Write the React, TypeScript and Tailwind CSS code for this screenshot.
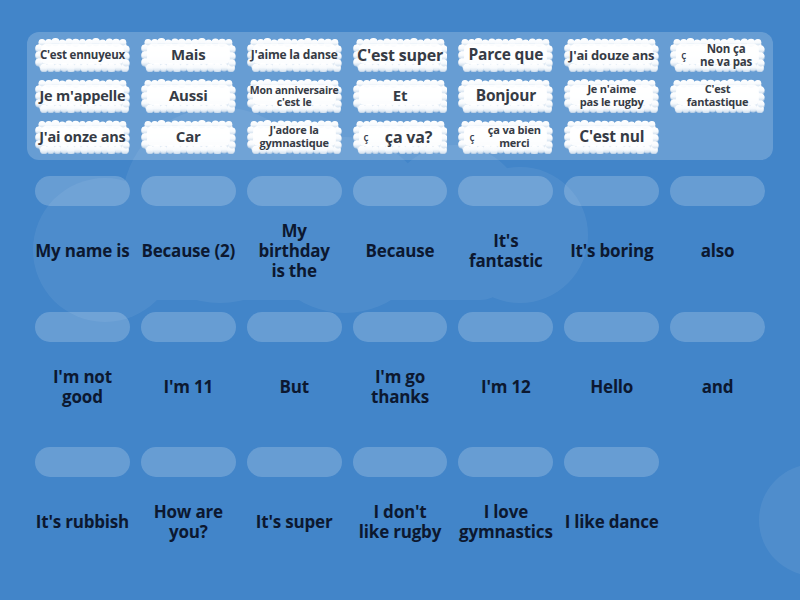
import React from "react";

type Tile = {
  text: string;
  size: number;
  cedilla?: boolean;
};

const tiles: Tile[] = [
  { text: "C'est ennuyeux", size: 11.5 },
  { text: "Mais", size: 15 },
  { text: "J'aime la danse", size: 12 },
  { text: "C'est super", size: 16 },
  { text: "Parce que", size: 15.5 },
  { text: "J'ai douze ans", size: 13 },
  { text: "Non ça\nne va pas", size: 11.5, cedilla: true },
  { text: "Je m'appelle", size: 14.5 },
  { text: "Aussi", size: 15 },
  { text: "Mon anniversaire\nc'est le", size: 10.5 },
  { text: "Et", size: 15 },
  { text: "Bonjour", size: 15.5 },
  { text: "Je n'aime\npas le rugby", size: 11 },
  { text: "C'est\nfantastique", size: 11 },
  { text: "J'ai onze ans", size: 14.5 },
  { text: "Car", size: 15 },
  { text: "J'adore la\ngymnastique", size: 11 },
  { text: "ça va?", size: 16, cedilla: true },
  { text: "ça va bien\nmerci", size: 11, cedilla: true },
  { text: "C'est nul", size: 15.5 },
];

const targets: string[][] = [
  [
    "My name is",
    "Because (2)",
    "My\nbirthday\nis the",
    "Because",
    "It's\nfantastic",
    "It's boring",
    "also",
  ],
  ["I'm not\ngood", "I'm 11", "But", "I'm go\nthanks", "I'm 12", "Hello", "and"],
  [
    "It's rubbish",
    "How are\nyou?",
    "It's super",
    "I don't\nlike rugby",
    "I love\ngymnastics",
    "I like dance",
  ],
];

// puffy outline: circles strung along a rounded rect
function CloudShape() {
  const puffs: { x: number; y: number; r: number }[] = [];
  for (let i = 0; i < 13; i++) {
    const x = 7 + i * 6.75;
    puffs.push({ x, y: 4.2 + (i % 2) * 0.6, r: 3.6 + (i % 3) * 0.4 });
    puffs.push({ x: x + 2, y: 29.6 - (i % 2) * 0.6, r: 3.8 + ((i + 1) % 3) * 0.4 });
  }
  for (let j = 0; j < 3; j++) {
    const y = 10 + j * 7;
    puffs.push({ x: 3.8, y, r: 3.7 });
    puffs.push({ x: 91.2, y: y + 1, r: 3.7 });
  }
  return (
    <svg
      viewBox="0 0 95 34"
      preserveAspectRatio="none"
      className="absolute inset-0 h-full w-full"
    >
      <defs>
        <linearGradient id="puff" x1="0" y1="0" x2="0" y2="1">
          <stop offset="0" stopColor="#ffffff" />
          <stop offset="0.55" stopColor="#f7fafd" />
          <stop offset="1" stopColor="#d3e1ef" />
        </linearGradient>
      </defs>
      <g fill="#b9cfe6" transform="translate(0 0.8)">
        <rect x="3" y="3" width="89" height="28" rx="6" />
        {puffs.map((p, i) => (
          <circle key={i} cx={p.x} cy={p.y} r={p.r} />
        ))}
      </g>
      <g fill="url(#puff)">
        <rect x="3" y="3" width="89" height="28" rx="6" />
        {puffs.map((p, i) => (
          <circle key={i} cx={p.x} cy={p.y} r={p.r - 0.3} />
        ))}
      </g>
      <rect x="6" y="6" width="83" height="20" rx="5" fill="#ffffff" opacity="0.85" />
    </svg>
  );
}

function WordTile({ tile }: { tile: Tile }) {
  return (
    <div
      className={`relative flex h-[34px] items-center justify-center ${tile.cedilla ? "pl-[11px]" : ""}`}
    >
      <CloudShape />
      {tile.cedilla && (
        <span className="relative w-[6px] shrink-0 text-[10px] font-semibold leading-none text-[#3a4250]">
          ç
        </span>
      )}
      <div
        className={`relative whitespace-pre text-center font-bold leading-[1.15] tracking-[-0.2px] text-[#363b45] ${tile.cedilla ? "flex-1" : ""}`}
        style={{ fontSize: tile.size }}
      >
        {tile.text}
      </div>
    </div>
  );
}

function Backdrop() {
  return (
    <svg viewBox="0 0 800 600" className="absolute inset-0 h-full w-full">
      <g fill="#ffffff" opacity="0.06">
        <circle cx="105" cy="250" r="72" />
        <circle cx="220" cy="205" r="98" />
        <circle cx="345" cy="225" r="88" />
        <circle cx="455" cy="215" r="70" />
        <circle cx="520" cy="235" r="68" />
        <rect x="90" y="220" width="420" height="80" rx="30" />
      </g>
      <g fill="#ffffff" opacity="0.07">
        <circle cx="815" cy="520" r="56" />
      </g>
    </svg>
  );
}

export default function App() {
  return (
    <div
      className="relative h-[600px] w-[800px] overflow-hidden bg-[#4285c9]"
      style={{ fontFamily: "'Open Sans', sans-serif" }}
    >
      <Backdrop />

      {/* word bank */}
      <div className="relative mx-[27px] mt-[32px] grid grid-cols-7 gap-x-[11px] gap-y-[7px] rounded-[12px] bg-white/20 px-[8px] py-[6px]">
        {tiles.map((t) => (
          <WordTile key={t.text} tile={t} />
        ))}
      </div>

      {/* drop targets */}
      <div className="relative mx-[35px] mt-[16px] flex flex-col gap-y-[15.5px]">
        {targets.map((row, r) => (
          <div key={r} className="grid grid-cols-7 gap-x-[11px]">
            {row.map((label) => (
              <div key={label} className="flex flex-col">
                <div className="h-[30px] rounded-full bg-white/20" />
                <div className="flex h-[90px] items-center justify-center">
                  <div className="whitespace-pre text-center text-[17px] font-bold leading-[20px] tracking-[-0.2px] text-[#0c1830]">
                    {label}
                  </div>
                </div>
              </div>
            ))}
          </div>
        ))}
      </div>
    </div>
  );
}
